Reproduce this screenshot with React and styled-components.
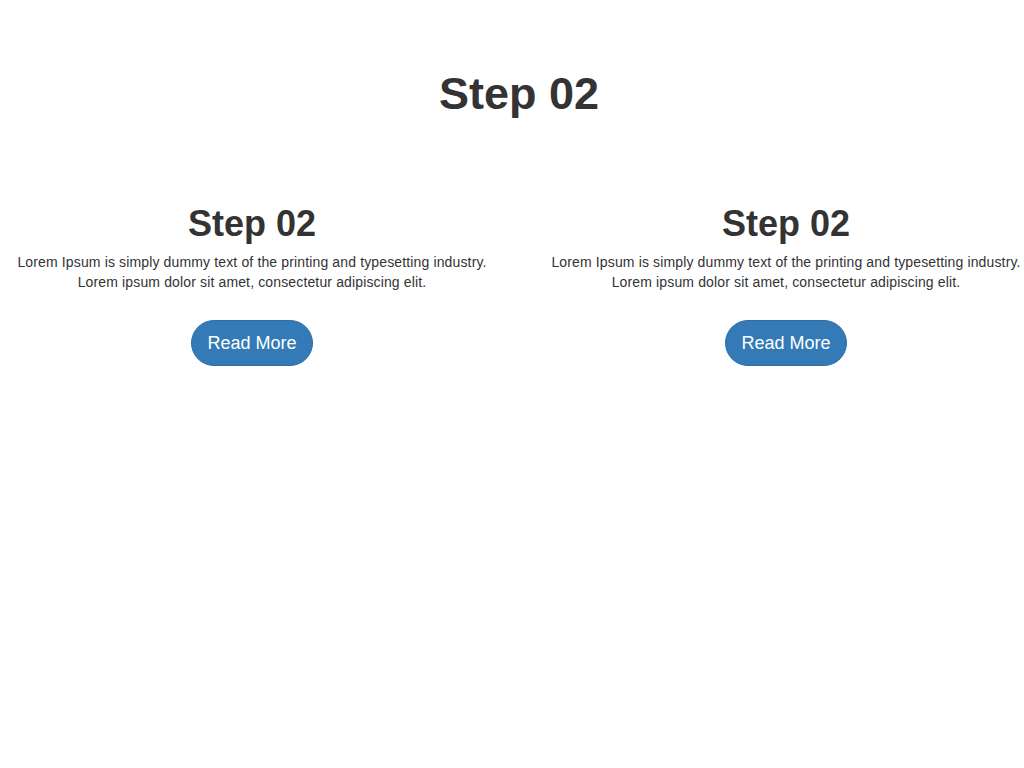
import React from "react";
import styled, { createGlobalStyle } from "styled-components";

const Global = createGlobalStyle`
  html, body { margin: 0; padding: 0; background: #fff; overflow: hidden; }
  body { font-family: "Liberation Sans", Arial, Helvetica, sans-serif; color: #333; font-size: 14px; line-height: 20px; }
`;

const Page = styled.div`
  width: 1068px;
  margin-left: -15px;
`;

const Title = styled.h1`
  margin: 0;
  padding-top: 69px;
  text-align: center;
  font-size: 45px;
  line-height: 1.1;
  font-weight: 700;
  color: #333;
`;

const Row = styled.div`
  display: flex;
  margin-top: 85px;
`;

const Col = styled.div`
  flex: 0 0 50%;
  box-sizing: border-box;
  padding: 0 15px;
  text-align: center;
`;

const Heading = styled.h2`
  margin: 0 0 9px;
  font-size: 36px;
  line-height: 1.1;
  font-weight: 700;
  color: #333;
`;

const Text = styled.p`
  margin: 0;
  font-size: 14px;
  line-height: 20px;
  letter-spacing: 0.14px;
`;

const Button = styled.button`
  margin-top: 28px;
  width: 122px;
  height: 46px;
  border-radius: 23px;
  border: 1px solid #2e6da4;
  background: #337ab7;
  color: #fff;
  font-family: inherit;
  font-size: 18px;
  padding: 0;
  cursor: pointer;
`;

const steps = [0, 1];

export default function App() {
  return (
    <>
      <Global />
      <Page>
        <Title>Step 02</Title>
        <Row>
          {steps.map((i) => (
            <Col key={i}>
              <Heading>Step 02</Heading>
              <Text>
                Lorem Ipsum is simply dummy text of the printing and typesetting industry.
                <br />
                Lorem ipsum dolor sit amet, consectetur adipiscing elit.
              </Text>
              <Button>Read More</Button>
            </Col>
          ))}
        </Row>
      </Page>
    </>
  );
}
